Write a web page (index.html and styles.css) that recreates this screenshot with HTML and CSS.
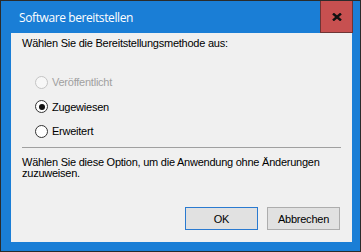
FILE: index.html
```html
<!DOCTYPE html>
<html>
<head>
    <title>Software bereitstellen</title>
    <meta name="viewport" content="width=device-width, initial-scale=1">
    <link rel="stylesheet" href="styles.css">
</head>
<body>
    <div class="window">
        <div class="titlebar">
            <span class="title">Software bereitstellen</span>
            <div class="close">
                <svg width="10" height="8" viewBox="0 0 10 8">
                    <path d="M1 0.5 L9 7.5 M9 0.5 L1 7.5" stroke="#111" stroke-width="2.4" fill="none"/>
                </svg>
            </div>
        </div>
        <div class="content">
            <p class="prompt">Wählen Sie die Bereitstellungsmethode aus:</p>
            <div class="options">
                <div class="option disabled"><span class="radio"></span>Veröffentlicht</div>
                <div class="option"><span class="radio checked"></span>Zugewiesen</div>
                <div class="option"><span class="radio"></span>Erweitert</div>
            </div>
            <hr class="separator">
            <p class="description">Wählen Sie diese Option, um die Anwendung ohne Änderungen zuzuweisen.</p>
            <div class="buttons">
                <button class="default">OK</button>
                <button>Abbrechen</button>
            </div>
        </div>
    </div>
</body>
</html>
```

FILE: styles.css
```css
body { margin: 0; font-family: "Liberation Sans", Arial, sans-serif; font-size: 11px; letter-spacing: -0.24px; color: #000; }
.window {
    width: 361px;
    height: 252px;
    box-sizing: border-box;
    border: 1px solid #2b2b2b;
    background: #1a7ed6;
    display: flex;
    flex-direction: column;
}
.titlebar {
    height: 32px;
    display: flex;
    align-items: stretch;
    justify-content: space-between;
}
.title {
    color: #fff;
    font-family: "Open Sans", "Noto Sans", sans-serif;
    font-size: 12px;
    letter-spacing: -0.4px;
    padding: 8px 0 0 18px;
}
.close {
    width: 31px;
    margin-right: 7px;
    background: #c75050;
    border: 1px solid #6e3434;
    border-top: none;
    display: flex;
    align-items: center;
    justify-content: center;
}
.content {
    flex: 1;
    margin: 0 8px 9px 10px;
    background: #f0f0f0;
    padding: 4px 11px 0 11px;
    display: flex;
    flex-direction: column;
}
.prompt { margin: 0; line-height: 13px; }
.options {
    padding: 25px 0 0 13px;
    display: flex;
    flex-direction: column;
    gap: 10.5px;
}
.option {
    display: flex;
    align-items: center;
    gap: 4px;
    height: 14px;
}
.option.disabled { color: #a0a0a0; }
.radio {
    width: 11px;
    height: 11px;
    border: 1px solid #333;
    border-radius: 50%;
    background: #fff;
    display: flex;
    align-items: center;
    justify-content: center;
}
.disabled .radio { border-color: #c4c4c4; background: #f7f7f7; }
.radio.checked::after {
    content: "";
    width: 6px;
    height: 6px;
    border-radius: 50%;
    background: #111;
}
.separator {
    margin: 9px 0 0 0;
    width: 319px;
    border: none;
    border-top: 1px solid #a0a0a0;
}
.description {
    margin: 9px 0 0 0;
    line-height: 11px;
    width: 310px;
}
.buttons {
    margin-top: auto;
    margin-bottom: 12px;
    display: flex;
    justify-content: flex-end;
    gap: 9px;
    padding-right: 1px;
}
button {
    width: 73px;
    height: 23px;
    background: #e1e1e1;
    border: 1px solid #adadad;
    font-family: "Liberation Sans", Arial, sans-serif;
    font-size: 11px;
    letter-spacing: -0.24px;
    color: #000;
    padding: 0;
}
button.default { border-color: #2a7ad0; }
```
